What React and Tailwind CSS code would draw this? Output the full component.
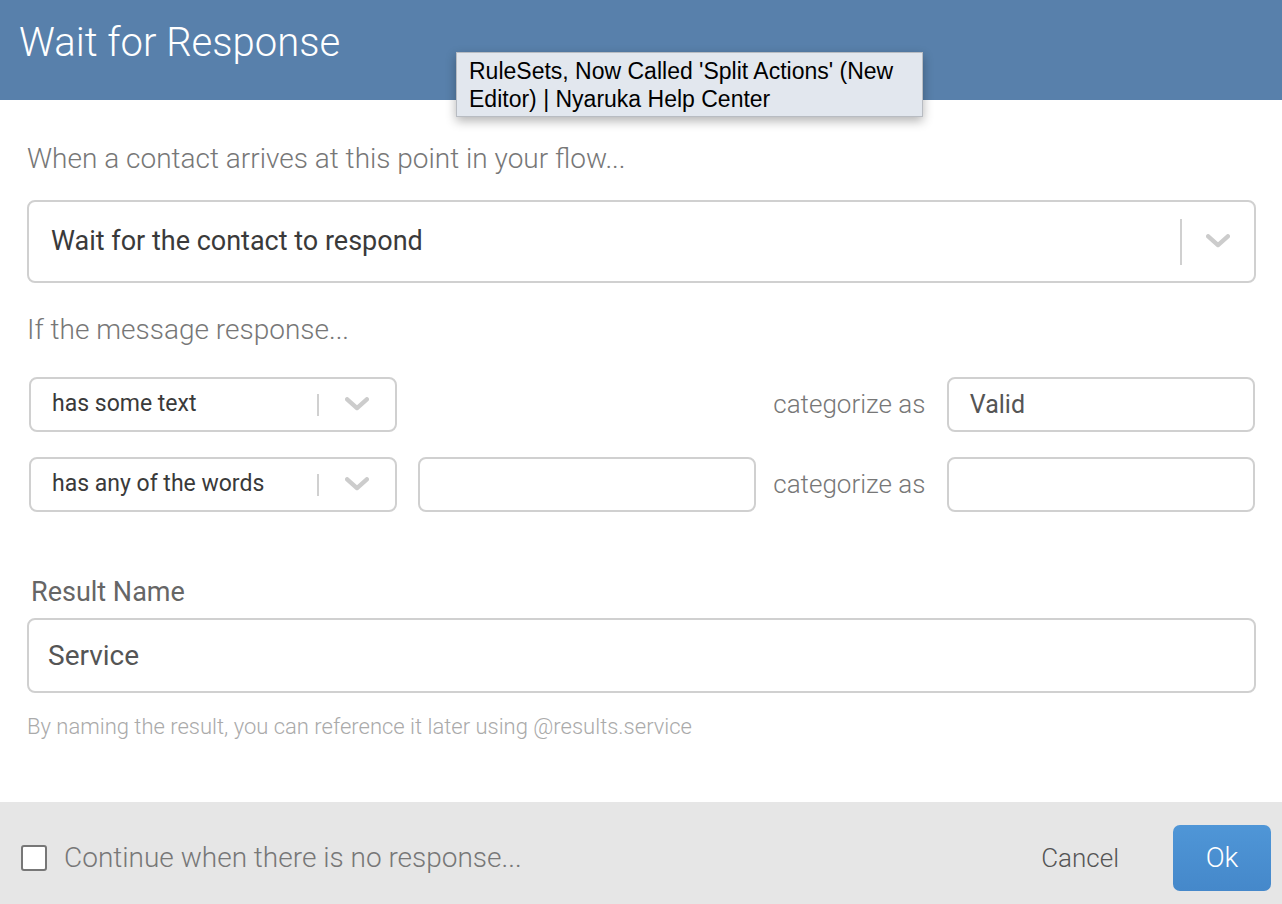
import React from "react";

function Chevron({ size = 22 }) {
  return (
    <svg width={size} height={size * 0.6} viewBox="0 0 22 13" fill="none">
      <path d="M2 2 L11 10 L20 2" stroke="#cccccc" strokeWidth="4" strokeLinecap="round" strokeLinejoin="round" />
    </svg>
  );
}

function SmallSelect({ text }) {
  return (
    <div className="flex items-center w-[369px] h-[55px] border-2 border-[#d0d0d0] rounded-[8px] bg-white">
      <span className="flex-1 pl-[21px] text-[23px] text-[#3a3a3a] font-normal">{text}</span>
      <div className="w-[2px] h-[22px] bg-[#d0d0d0]"></div>
      <div className="w-[76px] flex justify-center items-center">
        <Chevron size={24} />
      </div>
    </div>
  );
}

function Input({ w, text }) {
  return (
    <div className={`flex items-center h-[55px] border-2 border-[#d0d0d0] rounded-[8px] bg-white ${w}`}>
      <span className="pl-[21px] text-[25px] text-[#555]">{text}</span>
    </div>
  );
}

export default function App() {
  return (
    <div className="w-[1282px] h-[904px] bg-white flex flex-col relative overflow-hidden" style={{ fontFamily: "Roboto, 'Noto Sans', sans-serif" }}>
      <div className="h-[100px] bg-[#5880ab] flex items-start pl-[19px] pt-[19px] shrink-0">
        <h1 className="text-[40px] leading-[48px] font-light text-white">Wait for Response</h1>
      </div>

      <div className="absolute left-[456px] top-[52px] w-[467px] h-[65px] bg-[#e2e7ee] border border-[#b8bcc2] shadow-[0_4px_10px_rgba(0,0,0,0.3)] pl-[12px] pt-[4px] text-[23px] leading-[28px] text-black" style={{ fontFamily: "'Liberation Sans', Arial, sans-serif" }}>
        RuleSets, Now Called 'Split Actions' (New
        <br />
        Editor) | Nyaruka Help Center
      </div>

      <div className="flex-1 flex flex-col px-[27px]">
        <div className="mt-[41px] text-[28px] font-light text-[#777] leading-[36px]">When a contact arrives at this point in your flow...</div>
        <div className="mt-[23px] flex items-center h-[83px] border-2 border-[#d0d0d0] rounded-[8px] w-[1229px]">
          <span className="flex-1 pl-[22px] text-[27px] text-[#3a3a3a]">Wait for the contact to respond</span>
          <div className="w-[2px] h-[46px] bg-[#d0d0d0]"></div>
          <div className="w-[72px] flex justify-center items-center">
            <Chevron size={24} />
          </div>
        </div>
        <div className="mt-[29px] text-[28px] font-light text-[#777] leading-[36px]">If the message response...</div>

        <div className="mt-[29px] flex items-center pl-[2px]">
          <SmallSelect text="has some text" />
          <div className="w-[339px] ml-[21px]"></div>
          <span className="ml-[17px] text-[26px] font-light text-[#777] w-[174px]">categorize as</span>
          <Input w="w-[309px]" text="Valid" />
        </div>
        <div className="mt-[25px] flex items-center pl-[2px]">
          <SmallSelect text="has any of the words" />
          <Input w="w-[339px] ml-[21px]" text="" />
          <span className="ml-[17px] text-[26px] font-light text-[#777] w-[174px]">categorize as</span>
          <Input w="w-[309px]" text="" />
        </div>

        <div className="mt-[63px] pl-[4px] text-[27px] text-[#666] leading-[34px]">Result Name</div>
        <div className="mt-[9px] flex items-center h-[75px] border-2 border-[#d0d0d0] rounded-[8px] w-[1229px]">
          <span className="pl-[19px] text-[28px] text-[#555]">Service</span>
        </div>
        <div className="mt-[19px] text-[22px] font-light text-[#aaa] leading-[30px]">By naming the result, you can reference it later using @results.service</div>
      </div>

      <div className="h-[102px] bg-[#e6e6e6] flex items-center pt-[10px] shrink-0">
        <div className="ml-[21px] w-[26px] h-[26px] border-2 border-[#777] rounded-[3px] bg-white"></div>
        <span className="ml-[17px] text-[28px] font-light text-[#777]">Continue when there is no response...</span>
        <div className="flex-1"></div>
        <span className="text-[26px] font-light text-[#555] mr-[54px]">Cancel</span>
        <div className="w-[98px] h-[66px] rounded-[7px] bg-[#4a8fd1] bg-gradient-to-b from-[#4f96d7] to-[#4588ca] flex items-center justify-center mr-[11px]">
          <span className="text-[28px] font-light text-white">Ok</span>
        </div>
      </div>
    </div>
  );
}
